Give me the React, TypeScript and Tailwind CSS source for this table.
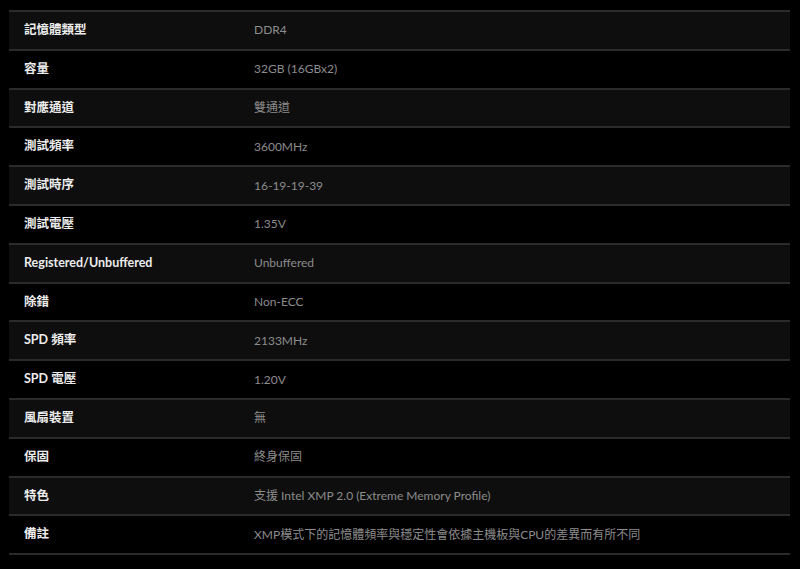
const specs: [string, string][] = [
  ['記憶體類型', 'DDR4'],
  ['容量', '32GB (16GBx2)'],
  ['對應通道', '雙通道'],
  ['測試頻率', '3600MHz'],
  ['測試時序', '16-19-19-39'],
  ['測試電壓', '1.35V'],
  ['Registered/Unbuffered', 'Unbuffered'],
  ['除錯', 'Non-ECC'],
  ['SPD 頻率', '2133MHz'],
  ['SPD 電壓', '1.20V'],
  ['風扇裝置', '無'],
  ['保固', '終身保固'],
  ['特色', '支援 Intel XMP 2.0 (Extreme Memory Profile)'],
  ['備註', 'XMP模式下的記憶體頻率與穩定性會依據主機板與CPU的差異而有所不同'],
];

export default function App() {
  return (
    <div
      className="w-[800px] h-[569px] bg-black pt-[10px] pl-[9px]"
      style={{ fontFamily: '"Lato", "Noto Sans CJK TC", sans-serif' }}
    >
      <div className="w-[781px] border-t-2 border-[#2b2b2b]">
        {specs.map(([label, value], i) => (
          <div
            key={label}
            className={
              'grid grid-cols-[245px_1fr] items-center h-[38.8px] border-b-2 border-[#2b2b2b] ' +
              (i % 2 === 0 ? 'bg-[#0e0e0e]' : 'bg-black')
            }
          >
            <div className="pl-[15px] text-[12.5px] font-bold text-[#ececec]">{label}</div>
            <div className="text-[12px] text-[#8c8c8c]">{value}</div>
          </div>
        ))}
      </div>
    </div>
  );
}
